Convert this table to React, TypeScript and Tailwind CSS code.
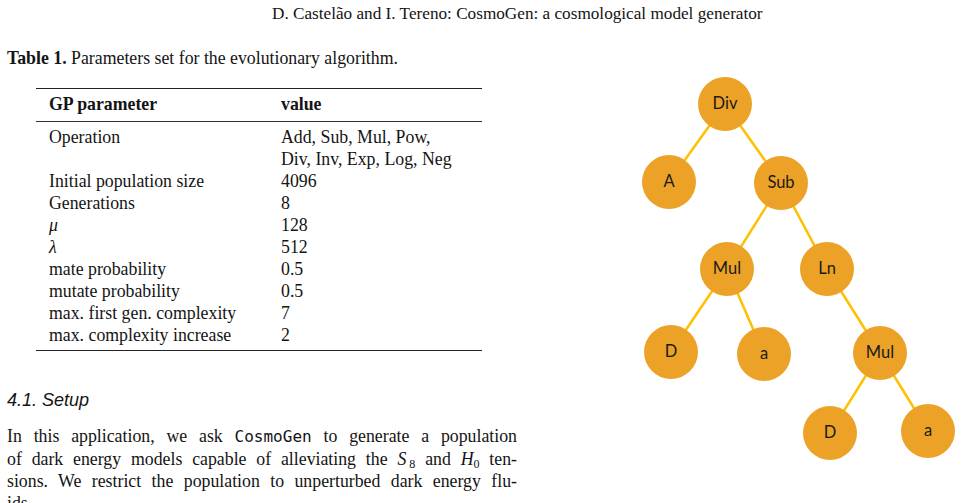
const rows: [React.ReactNode, string][] = [
  ["Initial population size", "4096"],
  ["Generations", "8"],
  [<i key="mu">μ</i>, "128"],
  [<i key="lambda">λ</i>, "512"],
  ["mate probability", "0.5"],
  ["mutate probability", "0.5"],
  ["max. first gen. complexity", "7"],
  ["max. complexity increase", "2"],
];

type TreeNode = { id: string; label: string; x: number; y: number };

const nodes: TreeNode[] = [
  { id: "div", label: "Div", x: 725, y: 104 },
  { id: "a1", label: "A", x: 669, y: 182 },
  { id: "sub", label: "Sub", x: 781, y: 183 },
  { id: "mul1", label: "Mul", x: 727, y: 269 },
  { id: "ln", label: "Ln", x: 827, y: 269 },
  { id: "d1", label: "D", x: 671, y: 352 },
  { id: "a2", label: "a", x: 764, y: 354 },
  { id: "mul2", label: "Mul", x: 880, y: 353 },
  { id: "d2", label: "D", x: 830, y: 433 },
  { id: "a3", label: "a", x: 928, y: 431 },
];

const edges: [string, string][] = [
  ["div", "a1"],
  ["div", "sub"],
  ["sub", "mul1"],
  ["sub", "ln"],
  ["mul1", "d1"],
  ["mul1", "a2"],
  ["ln", "mul2"],
  ["mul2", "d2"],
  ["mul2", "a3"],
];

const byId = (id: string) => nodes.find((n) => n.id === id)!;

function ExpressionTree() {
  return (
    <svg
      className="ml-auto mt-[35px] flex-none"
      width={330}
      height={420}
      viewBox="631 60 330 420"
    >
      {edges.map(([from, to]) => {
        const a = byId(from);
        const b = byId(to);
        return (
          <line
            key={from + to}
            x1={a.x}
            y1={a.y}
            x2={b.x}
            y2={b.y}
            stroke="#ffc000"
            strokeWidth={2.5}
          />
        );
      })}
      {nodes.map((n) => (
        <g key={n.id}>
          <circle cx={n.x} cy={n.y} r={27} fill="#eba226" />
          <text
            x={n.x}
            y={n.y + 1}
            textAnchor="middle"
            dominantBaseline="middle"
            fontFamily="Lato, 'Open Sans', sans-serif"
            fontSize={16.5}
            fill="#1a1a1a"
          >
            {n.label}
          </text>
        </g>
      ))}
    </svg>
  );
}

export default function App() {
  return (
    <div className="relative w-[961px] h-[503px] overflow-hidden bg-white text-[#141414] font-['Liberation_Serif',serif] text-[17.8px] leading-[22px]">
      <div className="pt-[3px] pl-[272px] whitespace-nowrap text-[17.2px]">
        D. Castelão and I. Tereno: CosmoGen: a cosmological model generator
      </div>

      <div className="flex">
        <div className="w-[517px] flex-none pl-[7px]">
          <p className="mt-[22px] whitespace-nowrap">
            <b>Table 1.</b> Parameters set for the evolutionary algorithm.
          </p>

          <div className="ml-[29px] mt-[19px] w-[446px] border-t-[1.5px] border-b-[1.5px] border-[#222]">
            <div className="flex pt-[4px] pb-[6px] font-bold border-b border-[#333]">
              <span className="w-[245px] pl-[13px]">GP parameter</span>
              <span>value</span>
            </div>
            <div className="pt-[4px] pb-[4px]">
              <div className="flex">
                <span className="w-[245px] pl-[13px]">Operation</span>
                <span>
                  Add, Sub, Mul, Pow,
                  <br />
                  Div, Inv, Exp, Log, Neg
                </span>
              </div>
              {rows.map(([label, value], i) => (
                <div key={i} className="flex">
                  <span className="w-[245px] pl-[13px]">{label}</span>
                  <span>{value}</span>
                </div>
              ))}
            </div>
          </div>

          <h3 className="mt-[38px] font-['Liberation_Sans',sans-serif] italic text-[18px]">
            4.1. Setup
          </h3>

          <div className="mt-[14px] w-[510px] [text-align-last:justify] text-justify">
            <p>
              In this application, we ask{" "}
              <span className="font-['DejaVu_Sans_Mono',monospace] text-[16px]">CosmoGen</span>{" "}
              to generate a population
            </p>
            <p>
              of dark energy models capable of alleviating the <i>S</i>
              <sub className="text-[12px] ml-[3px]">8</sub> and <i>H</i>
              <sub className="text-[12px]">0</sub> ten-
            </p>
            <p>sions. We restrict the population to unperturbed dark energy flu-</p>
            <p className="[text-align-last:left]">ids.</p>
          </div>
        </div>

        <ExpressionTree />
      </div>
    </div>
  );
}
